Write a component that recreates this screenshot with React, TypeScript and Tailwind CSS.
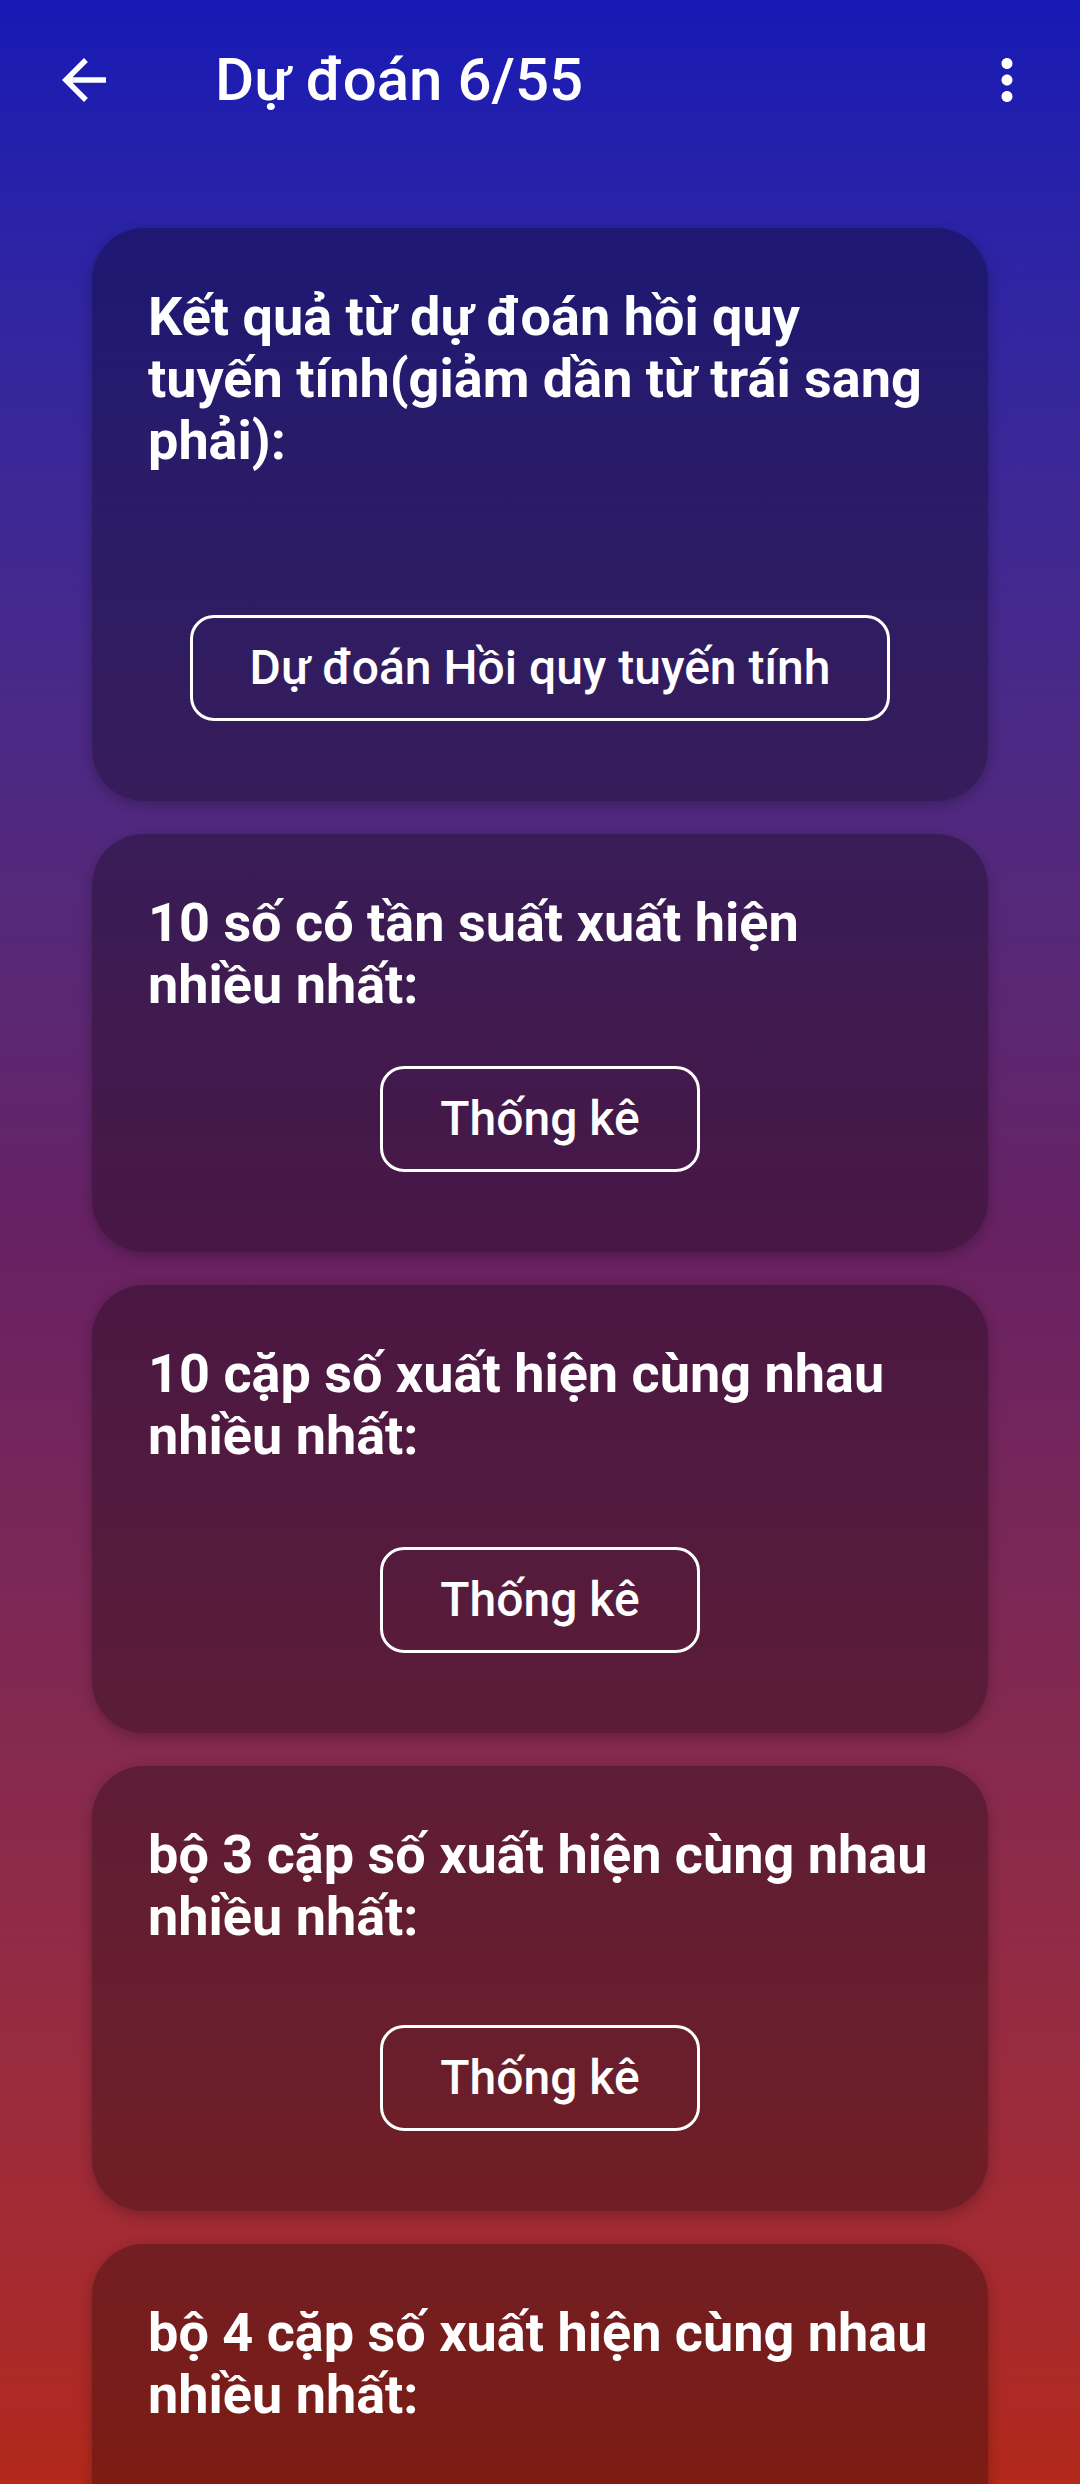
import React from "react";

const CARDS = [
  { lines: ["Kết quả từ dự đoán hồi quy", "tuyến tính(giảm dần từ trái sang", "phải):"], button: "Dự đoán Hồi quy tuyến tính", gap: "mt-[143px]", wide: true },
  { lines: ["10 số có tần suất xuất hiện", "nhiều nhất:"], button: "Thống kê", gap: "mt-[50px]", wide: false },
  { lines: ["10 cặp số xuất hiện cùng nhau", "nhiều nhất:"], button: "Thống kê", gap: "mt-[80px]", wide: false },
  { lines: ["bộ 3 cặp số xuất hiện cùng nhau", "nhiều nhất:"], button: "Thống kê", gap: "mt-[77px]", wide: false },
  { lines: ["bộ 4 cặp số xuất hiện cùng nhau", "nhiều nhất:"], button: "Thống kê", gap: "mt-[80px]", wide: false },
];

export default function App() {
  return (
    <div className="h-[2484px] w-[1080px] overflow-hidden bg-gradient-to-b from-[#1719b6] via-[#682163] to-[#b3291a] font-['Roboto',sans-serif] text-white">
      {/* Toolbar */}
      <div className="flex h-[160px] items-center">
        <svg viewBox="0 0 24 24" className="ml-[51px] h-[66px] w-[66px] fill-white">
          <path d="M20 11H7.83l5.59-5.59L12 4l-8 8 8 8 1.41-1.41L7.83 13H20v-2z" />
        </svg>
        <h1 className="ml-[98px] flex-1 text-[60px] font-medium leading-none">Dự đoán 6/55</h1>
        <svg viewBox="0 0 24 24" className="mr-[40px] h-[66px] w-[66px] fill-white">
          <path d="M12 8c1.1 0 2-.9 2-2s-.9-2-2-2-2 .9-2 2 .9 2 2 2zm0 2c-1.1 0-2 .9-2 2s.9 2 2 2 2-.9 2-2-.9-2-2-2zm0 6c-1.1 0-2 .9-2 2s.9 2 2 2 2-.9 2-2-.9-2-2-2z" />
        </svg>
      </div>

      {/* Cards */}
      <div className="mt-[68px] flex flex-col gap-[33px] px-[92px]">
        {CARDS.map((card) => (
          <div
            key={card.lines[0]}
            className="flex flex-col rounded-[52px] bg-black/30 px-[56px] pb-[80px] pt-[58px] shadow-[0_4px_14px_rgba(0,0,0,0.25)]"
          >
            <p className="whitespace-nowrap text-[54px] font-bold leading-[62px]">
              {card.lines.map((line, i) => (
                <React.Fragment key={i}>
                  {i > 0 && <br />}
                  {line}
                </React.Fragment>
              ))}
            </p>
            <button
              className={`${card.gap} mx-auto flex h-[106px] items-center justify-center rounded-[24px] border-[3px] border-white text-[48px] font-medium ${card.wide ? "w-[700px]" : "w-[320px]"}`}
            >
              {card.button}
            </button>
          </div>
        ))}
      </div>
    </div>
  );
}
